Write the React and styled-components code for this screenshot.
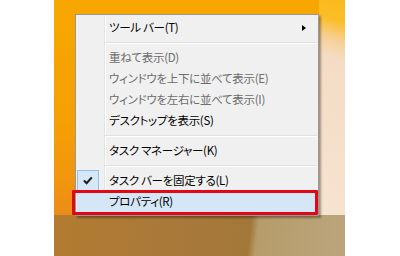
import React from "react";
import styled, { createGlobalStyle } from "styled-components";

const Global = createGlobalStyle`
  html, body { margin: 0; padding: 0; background: #ffffff; }
  body { font-family: "Noto Sans CJK JP", "Noto Sans", sans-serif; }
`;

const Page = styled.div`
  width: 400px;
  height: 256px;
  display: flex;
  padding-left: 54px;
  box-sizing: border-box;
  background: #fff;
`;

const Desktop = styled.div`
  position: relative;
  width: 291px;
  height: 256px;
  display: flex;
  flex-direction: column;
  overflow: hidden;
`;

const Wallpaper = styled.div`
  flex: 1;
  background:
    linear-gradient(196deg, #fbb91c 0px, #fbbd28 22px, #f7cf92 40px, #f4dcc4 58px, #f6e3d0 100%) right top / 26px 100% no-repeat,
    linear-gradient(180deg, #f8a700 0%, #f5a003 55%, #f1950f 85%, #ec8c18 100%);
`;

const Taskbar = styled.div`
  height: 41px;
  background:
    linear-gradient(97deg, #b37b30 0%, #a9793a 40%, #a27838 67%, #b69c6a 69.5%, #bba57c 100%);
`;

const Menu = styled.div`
  position: absolute;
  left: 21px;
  top: 14px;
  width: 244px;
  box-sizing: border-box;
  border: 1px solid #979797;
  padding: 2px 1px 2px 1px;
  background:
    linear-gradient(to right, transparent 28px, #e2e3e3 28px, #e2e3e3 29px, #ffffff 29px, #ffffff 30px, transparent 30px),
    #f0f0f0;
  box-shadow: 2px 2px 2px rgba(0, 0, 0, 0.35);
  font-size: 11.5px;
  letter-spacing: -0.3px;
  font-feature-settings: "palt";
  display: flex;
  flex-direction: column;
`;

const Item = styled.div`
  position: relative;
  height: ${(p) => (p.$tall ? 22 : 21)}px;
  display: flex;
  align-items: center;
  padding-left: 32px;
  color: ${(p) => (p.$disabled ? "#6d6d6d" : "#000000")};
  background: ${(p) => (p.$highlight ? "#d5e6f7" : "transparent")};
  white-space: nowrap;
  line-height: 1;
`;

const Separator = styled.div`
  height: 9px;
  margin-left: 28px;
  display: flex;
  flex-direction: column;
  justify-content: center;
  &::before {
    content: "";
    display: block;
    height: 1px;
    background: #e0e0e0;
  }
  &::after {
    content: "";
    display: block;
    height: 1px;
    background: #ffffff;
  }
`;

const CheckBox = styled.div`
  position: absolute;
  left: 0;
  top: 0;
  width: 22px;
  height: 21px;
  box-sizing: border-box;
  border: 1px solid #8fc1ea;
  background: #d6e8f8;
  display: flex;
  align-items: center;
  justify-content: center;
`;

const Arrow = styled.div`
  position: absolute;
  right: 11px;
  top: 8px;
  width: 0;
  height: 0;
  border-top: 3.5px solid transparent;
  border-bottom: 3.5px solid transparent;
  border-left: 4px solid #000;
`;

const Highlight = styled.div`
  position: absolute;
  left: -5px;
  top: -1px;
  width: 246px;
  height: 25px;
  box-sizing: border-box;
  border: 3px solid #e30613;
  border-radius: 1px;
  pointer-events: none;
`;

const items = [
  { label: "ツール バー(T)", sub: true },
  { sep: true },
  { label: "重ねて表示(D)", disabled: true },
  { label: "ウィンドウを上下に並べて表示(E)", disabled: true },
  { label: "ウィンドウを左右に並べて表示(I)", disabled: true },
  { label: "デスクトップを表示(S)" },
  { sep: true },
  { label: "タスク マネージャー(K)" },
  { sep: true },
  { label: "タスク バーを固定する(L)", checked: true },
  { label: "プロパティ(R)", highlight: true },
];

export default function App() {
  return (
    <>
      <Global />
      <Page>
        <Desktop>
          <Wallpaper />
          <Taskbar />
          <Menu>
            {items.map((it, i) =>
              it.sep ? (
                <Separator key={i} />
              ) : (
                <Item
                  key={i}
                  $disabled={it.disabled}
                  $highlight={it.highlight}
                  $tall={it.highlight}
                >
                  {it.checked && (
                    <CheckBox>
                      <svg width="10" height="9" viewBox="0 0 10 9">
                        <path d="M1 4.6 L3.6 7.2 L8.8 1.4" fill="none" stroke="#1e1e1e" strokeWidth="2.1" />
                      </svg>
                    </CheckBox>
                  )}
                  {it.label}
                  {it.sub && <Arrow />}
                  {it.highlight && <Highlight />}
                </Item>
              )
            )}
          </Menu>
        </Desktop>
      </Page>
    </>
  );
}
